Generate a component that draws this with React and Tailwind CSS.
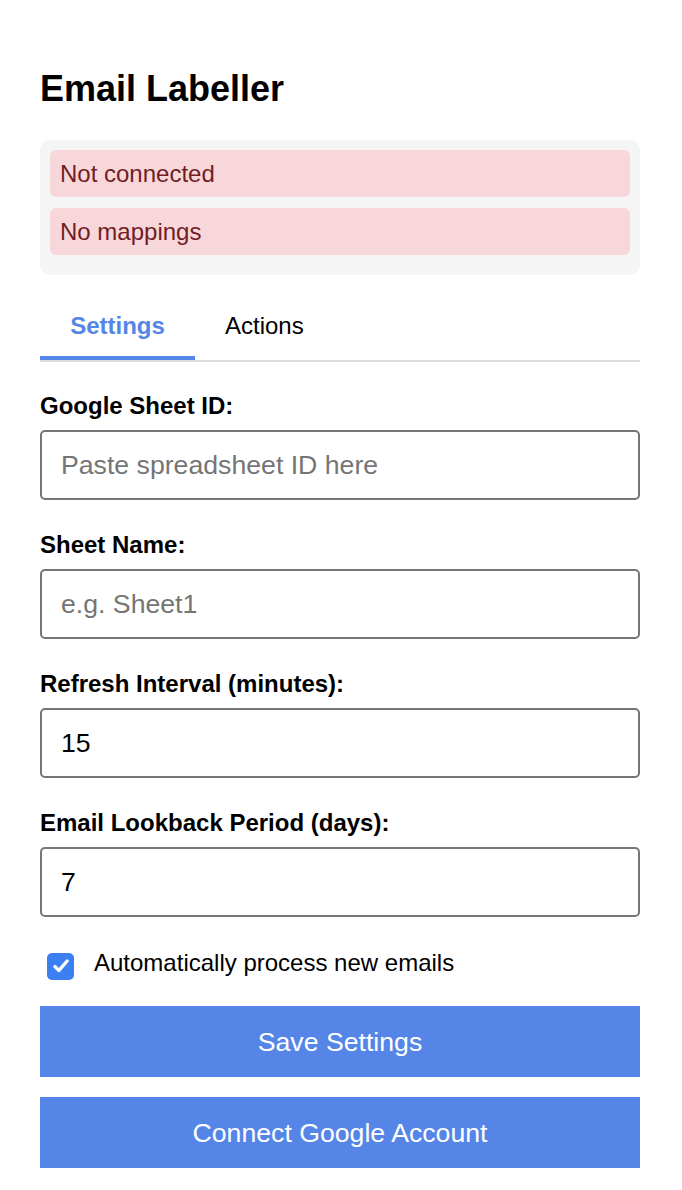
export default function App() {
  const font = { fontFamily: '"Liberation Sans", Arial, Helvetica, sans-serif' };
  const fields = [
    { label: "Google Sheet ID:", placeholder: "Paste spreadsheet ID here", value: "" },
    { label: "Sheet Name:", placeholder: "e.g. Sheet1", value: "" },
    { label: "Refresh Interval (minutes):", placeholder: "", value: "15" },
    { label: "Email Lookback Period (days):", placeholder: "", value: "7" },
  ];
  return (
    <div className="bg-white text-black min-h-[1190px] pl-[40px] pr-[42px] pt-[68px] pb-[22px]" style={font}>
      <h1 className="text-[36px] font-bold leading-[41px] m-0">Email Labeller</h1>
      <div className="mt-[31px] bg-[#f5f5f5] rounded-[10px] pt-[10px] pb-[10px] px-[10px]">
        <div className="bg-[#f8d7da] text-[#721c24] rounded-[6px] h-[47px] flex items-center px-[10px] text-[24px] mb-[11px]">
          Not connected
        </div>
        <div className="bg-[#f8d7da] text-[#721c24] rounded-[6px] h-[47px] flex items-center px-[10px] text-[24px] mb-[10px]">
          No mappings
        </div>
      </div>
      <div className="mt-[20px] flex border-b-2 border-[#dddddd]">
        <div className="h-[65px] w-[155px] flex items-center justify-center border-b-4 border-[#5485e7] text-[24px] font-bold text-[#5485e7]">
          Settings
        </div>
        <div className="h-[65px] px-[30px] flex items-center justify-center text-[24px] text-black pb-[3px]">
          Actions
        </div>
      </div>
      <div className="flex flex-col">
        {fields.map((f, i) => (
          <div key={i} className={i === 0 ? "mt-[30px] flex flex-col" : "mt-[31px] flex flex-col"}>
            <label className="text-[24px] font-bold leading-[28px] mb-[10px]">{f.label}</label>
            <input
              type="text"
              defaultValue={f.value}
              placeholder={f.placeholder}
              className="h-[70px] w-full border-2 border-[#767676] rounded-[5px] px-[19px] text-[26.67px] text-black placeholder:text-[#757575] outline-none bg-white"
              style={font}
            />
          </div>
        ))}
      </div>
      <label className="mt-[33px] flex items-center h-[28px]">
        <span className="ml-[7px] w-[27px] h-[27px] rounded-[5px] bg-[#3b7ff3] flex items-center justify-center shrink-0 mt-[4px]">
          <svg width="20" height="20" viewBox="0 0 18 18" fill="none">
            <path d="M3.5 9.5 L7.2 13 L14.5 4.5" stroke="white" strokeWidth="3" strokeLinecap="round" strokeLinejoin="round" />
          </svg>
        </span>
        <span className="ml-[20px] text-[24px] leading-[28px] -mt-[2px]">Automatically process new emails</span>
      </label>
      <button className="mt-[28px] w-full h-[71px] bg-[#5485e7] text-white text-[26.67px] flex items-center justify-center" style={font}>
        Save Settings
      </button>
      <button className="mt-[20px] w-full h-[71px] bg-[#5485e7] text-white text-[26.67px] flex items-center justify-center" style={font}>
        Connect Google Account
      </button>
    </div>
  );
}
